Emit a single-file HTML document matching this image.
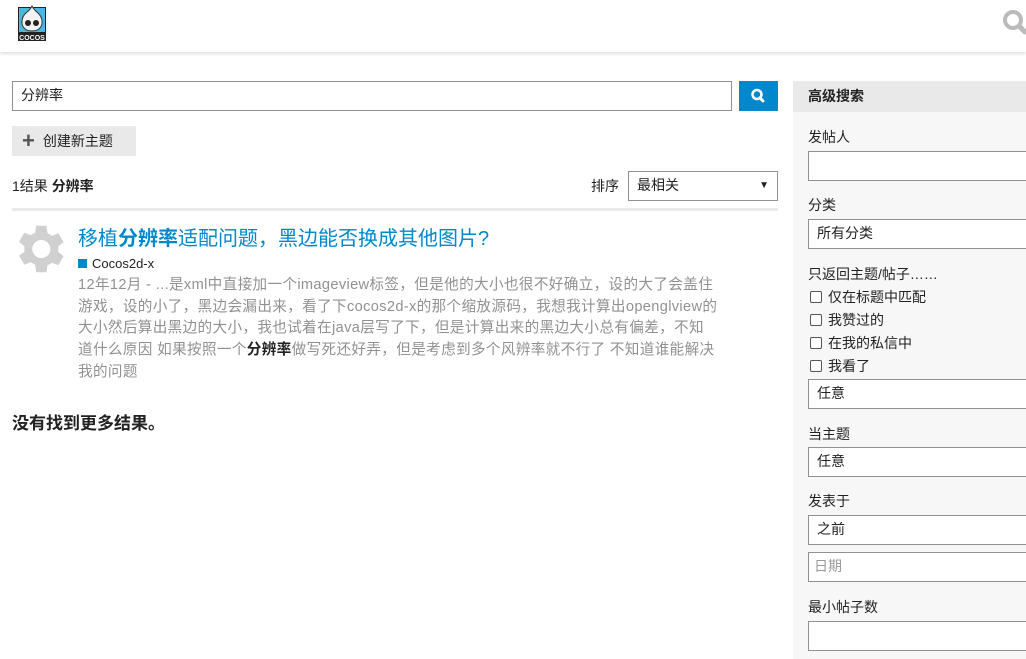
<!DOCTYPE html>
<html><head><meta charset="utf-8"><style>
*{margin:0;padding:0;box-sizing:border-box}
body{width:1026px;height:659px;overflow:hidden;background:#fff;font-family:"Liberation Sans","Noto Sans CJK SC",sans-serif;color:#222;font-size:14px;position:relative}
.a{position:absolute}
.box{position:absolute;border:1px solid #919191;background:#fff;font-size:14px;line-height:27px;padding-left:8px;color:#222}
.lbl{position:absolute;left:808px;font-size:14px;color:#222}
.cb{position:absolute;left:810px;font-size:14px}
.cb i{display:inline-block;width:12px;height:12px;border:1px solid #555;border-radius:2px;vertical-align:-1px;margin-right:6px;background:#fff}
</style></head><body>
<div class="a" style="left:0;top:0;width:1026px;height:52px;background:#fff;box-shadow:0 2px 3px rgba(0,0,0,.12)"></div>
<svg class="a" style="left:17px;top:4px" width="30" height="40" viewBox="0 0 30 40">
<rect x="1" y="3" width="28" height="34" fill="#222"/>
<rect x="2" y="4" width="26" height="24" fill="#4db8df"/>
<path d="M15 2 Q17 6 21 9 Q26 14 25 20 Q23 27 15 27 Q7 27 5 20 Q4 13 10 8 Q13 6 15 2Z" fill="#f2f2f2" stroke="#333" stroke-width="1"/>
<ellipse cx="11" cy="19" rx="3" ry="3" fill="#222"/><ellipse cx="19" cy="19" rx="3" ry="3" fill="#222"/>
<text x="15" y="36" font-size="7" fill="#fff" text-anchor="middle" font-family="Liberation Sans" font-weight="bold">COCOS</text>
</svg>
<svg class="a" style="left:1002px;top:9px" width="26" height="28" viewBox="0 0 26 28"><circle cx="11" cy="11" r="8" fill="none" stroke="#bbb" stroke-width="4"/><path d="M17 17 L23 23" stroke="#bbb" stroke-width="5" stroke-linecap="round"/></svg>

<div class="box" style="left:12px;top:81px;width:720px;height:30px">分辨率</div>
<div class="a" style="left:739px;top:81px;width:39px;height:30px;background:#0088cc"><svg width="39" height="30"><circle cx="18" cy="13.5" r="4.5" fill="none" stroke="#fff" stroke-width="2.5"/><path d="M21 17 L24 20" stroke="#fff" stroke-width="3" stroke-linecap="round"/></svg></div>
<div class="a" style="left:12px;top:126px;width:124px;height:30px;background:#e9e9e9;line-height:30px;font-size:14px;padding-left:10px;color:#222"><span style="font-size:22px;color:#555;font-weight:bold;vertical-align:-2px;margin-right:8px">+</span>创建新主题</div>
<div class="a" style="left:12px;top:176px;font-size:14px">1结果 <b>分辨率</b></div>
<div class="a" style="left:591px;top:176px;font-size:14px">排序</div>
<div class="box" style="left:628px;top:171px;width:150px;height:30px">最相关<span style="position:absolute;right:8px;top:0;font-size:10px">▼</span></div>
<div class="a" style="left:12px;top:208px;width:766px;height:3px;background:#e9e9e9"></div>
<svg class="a" style="left:8px;top:218px" width="62" height="62" viewBox="0 0 24 24"><path fill="#d0d0d0" d="M19.4 13a7.5 7.5 0 0 0 0-2l2.1-1.6-2-3.5-2.5 1a7.6 7.6 0 0 0-1.7-1L14.9 3h-4l-.4 2.7a7.6 7.6 0 0 0-1.7 1l-2.5-1-2 3.5L6.4 11a7.5 7.5 0 0 0 0 2l-2.1 1.6 2 3.5 2.5-1a7.6 7.6 0 0 0 1.7 1l.4 2.9h4l.4-2.7a7.6 7.6 0 0 0 1.7-1l2.5 1 2-3.5ZM12.9 15.5a3.5 3.5 0 1 1 0-7 3.5 3.5 0 0 1 0 7Z"/></svg>
<div class="a" style="left:78px;top:222px;font-size:20px;color:#0088cc;white-space:nowrap">移植<b>分辨率</b>适配问题，黑边能否换成其他图片?</div>
<div class="a" style="left:78px;top:256px;font-size:13px;color:#222"><span style="display:inline-block;width:9px;height:9px;background:#0088cc;margin-right:5px"></span>Cocos2d-x</div>
<div class="a" style="left:78px;top:275px;font-size:14.6px;line-height:21.7px;color:#919191;white-space:nowrap;letter-spacing:0.35px">12年12月 - ...是xml中直接加一个imageview标签，但是他的大小也很不好确立，设的大了会盖住<br>游戏，设的小了，黑边会漏出来，看了下cocos2d-x的那个缩放源码，我想我计算出openglview的<br>大小然后算出黑边的大小，我也试着在java层写了下，但是计算出来的黑边大小总有偏差，不知<br>道什么原因 如果按照一个<b style="color:#222">分辨率</b>做写死还好弄，但是考虑到多个风辨率就不行了 不知道谁能解决<br>我的问题</div>
<div class="a" style="left:12px;top:409px;font-size:17px;font-weight:bold;color:#222">没有找到更多结果。</div>

<div class="a" style="left:793px;top:81px;width:233px;height:578px;background:#f7f7f7"></div>
<div class="a" style="left:793px;top:81px;width:233px;height:31px;background:#e9e9e9;padding-left:15px;line-height:31px;font-weight:bold;font-size:14px">高级搜索</div>
<div class="lbl" style="top:127px">发帖人</div>
<div class="box" style="left:808px;top:151px;width:230px;height:30px"></div>
<div class="lbl" style="top:195px">分类</div>
<div class="box" style="left:808px;top:219px;width:230px;height:30px">所有分类</div>
<div class="lbl" style="top:264px">只返回主题/帖子……</div>
<div class="cb" style="top:287px"><i></i>仅在标题中匹配</div>
<div class="cb" style="top:310px"><i></i>我赞过的</div>
<div class="cb" style="top:333px"><i></i>在我的私信中</div>
<div class="cb" style="top:356px"><i></i>我看了</div>
<div class="box" style="left:808px;top:379px;width:230px;height:30px">任意</div>
<div class="lbl" style="top:424px">当主题</div>
<div class="box" style="left:808px;top:447px;width:230px;height:30px">任意</div>
<div class="lbl" style="top:491px">发表于</div>
<div class="box" style="left:808px;top:515px;width:230px;height:30px">之前</div>
<div class="box" style="left:808px;top:552px;width:230px;height:30px;color:#999;padding-left:5px">日期</div>
<div class="lbl" style="top:597px">最小帖子数</div>
<div class="box" style="left:808px;top:621px;width:230px;height:30px"></div>
</body></html>
